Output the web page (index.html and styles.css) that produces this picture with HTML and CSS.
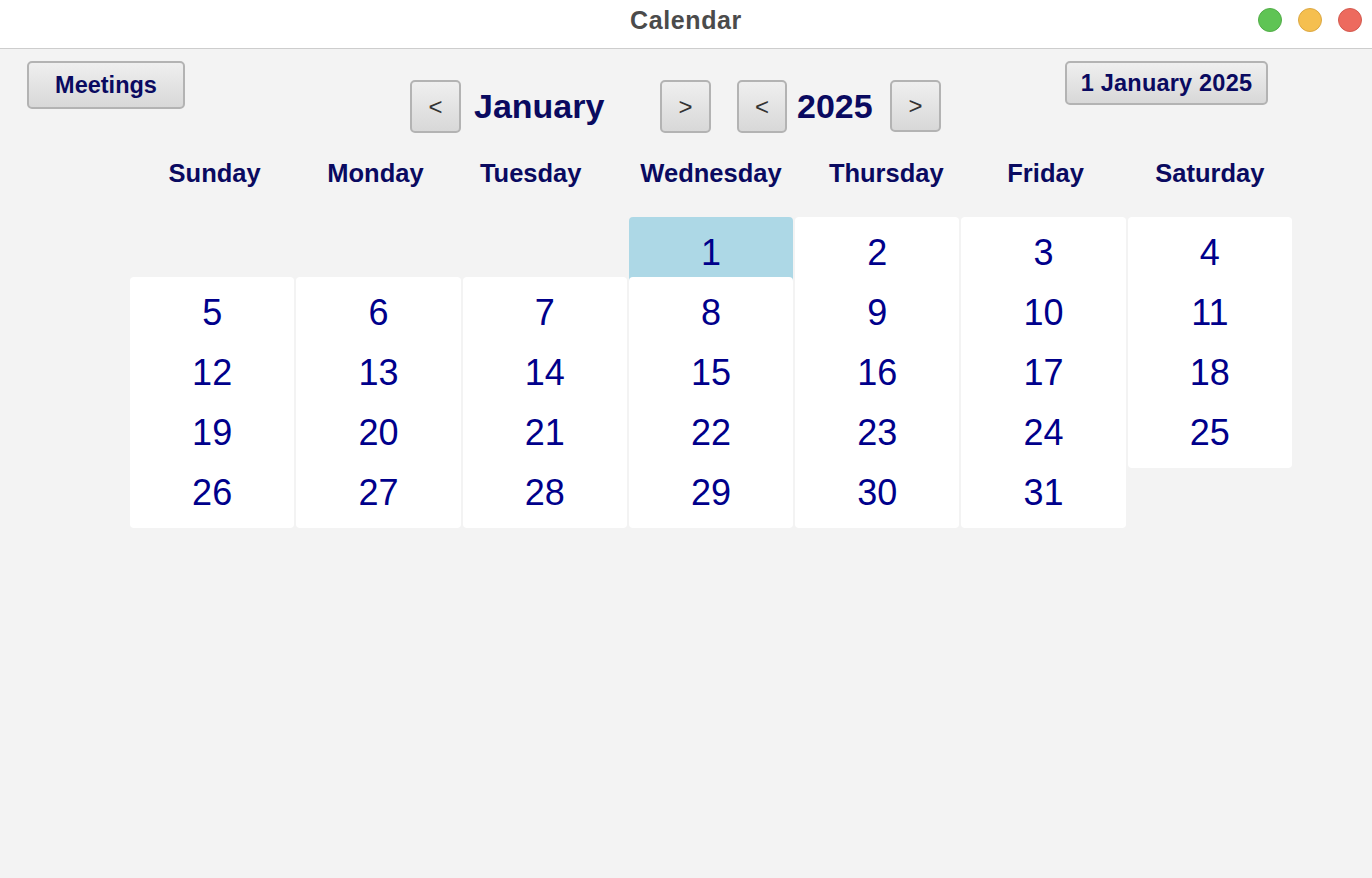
FILE: index.html
```html
<!DOCTYPE html>
<html lang="en">
<head>
<meta charset="utf-8">
<title>Calendar</title>
<link rel="stylesheet" href="styles.css">
</head>
<body>
<div class="window">
  <header class="titlebar">
    <div class="spacer"></div>
    <div class="title">Calendar</div>
    <div class="lights">
      <span class="light green"></span>
      <span class="light yellow"></span>
      <span class="light red"></span>
    </div>
  </header>
  <main class="content">
    <div class="toolbar">
      <button class="btn btn-meetings">Meetings</button>
      <div class="nav">
        <button class="btn btn-arrow">&lt;</button>
        <div class="month-label">January</div>
        <button class="btn btn-arrow">&gt;</button>
        <button class="btn btn-arrow year-prev">&lt;</button>
        <div class="year-label">2025</div>
        <button class="btn btn-arrow year-next">&gt;</button>
      </div>
      <button class="btn btn-today">1 January 2025</button>
    </div>
    <div class="weekdays">
      <div class="wd wd-sun">Sunday</div>
      <div class="wd wd-mon">Monday</div>
      <div class="wd wd-tue">Tuesday</div>
      <div class="wd">Wednesday</div>
      <div class="wd wd-thu">Thursday</div>
      <div class="wd wd-fri">Friday</div>
      <div class="wd">Saturday</div>
    </div>
    <div class="days">
      <div class="day selected first">1</div>
      <div class="day">2</div>
      <div class="day">3</div>
      <div class="day">4</div>
      <div class="day">5</div>
      <div class="day">6</div>
      <div class="day">7</div>
      <div class="day">8</div>
      <div class="day">9</div>
      <div class="day">10</div>
      <div class="day">11</div>
      <div class="day">12</div>
      <div class="day">13</div>
      <div class="day">14</div>
      <div class="day">15</div>
      <div class="day">16</div>
      <div class="day">17</div>
      <div class="day">18</div>
      <div class="day">19</div>
      <div class="day">20</div>
      <div class="day">21</div>
      <div class="day">22</div>
      <div class="day">23</div>
      <div class="day">24</div>
      <div class="day">25</div>
      <div class="day">26</div>
      <div class="day">27</div>
      <div class="day">28</div>
      <div class="day">29</div>
      <div class="day">30</div>
      <div class="day">31</div>
    </div>
  </main>
</div>
</body>
</html>
```
FILE: styles.css
```css
* { box-sizing: border-box; }
html, body {
  margin: 0;
  padding: 0;
  width: 1372px;
  height: 878px;
  overflow: hidden;
  background: #f3f3f3;
  font-family: "Liberation Sans", Arial, sans-serif;
}
.window {
  width: 1372px;
  height: 878px;
  display: flex;
  flex-direction: column;
}
.titlebar {
  height: 49px;
  background: #ffffff;
  border-bottom: 1px solid #cdcdcd;
  display: grid;
  grid-template-columns: 1fr auto 1fr;
  align-items: start;
  padding-top: 7px;
}
.title {
  font-weight: bold;
  font-size: 25px;
  line-height: 26px;
  color: #4b4b4b;
  letter-spacing: 0.6px;
}
.lights {
  display: flex;
  justify-content: flex-end;
  gap: 16px;
  padding-right: 10px;
  padding-top: 1px;
}
.light {
  width: 24px;
  height: 24px;
  border-radius: 50%;
  display: block;
}
.green { background: #5fc454; border: 1px solid #52ad48; }
.yellow { background: #f5bf4f; border: 1px solid #dca843; }
.red { background: #ed6a5e; border: 1px solid #d35a4f; }

.content {
  flex: 1;
  padding-top: 12px;
}
.toolbar {
  display: flex;
  align-items: flex-start;
  padding-left: 27px;
}
.btn {
  font-family: "Liberation Sans", Arial, sans-serif;
  background: linear-gradient(#efefef, #d8d8d8);
  border: 2px solid #b3b3b3;
  border-radius: 5px;
  padding: 0;
  margin: 0;
  cursor: default;
}
.btn-meetings {
  width: 158px;
  height: 48px;
  font-weight: bold;
  font-size: 23.5px;
  color: #0a0a60;
}
.btn-today {
  margin-left: 124px;
  width: 203px;
  height: 44px;
  font-weight: bold;
  font-size: 23.5px;
  color: #0a0a60;
  letter-spacing: 0.2px;
}
.nav {
  margin-left: 225px;
  margin-top: 19px;
  display: flex;
  align-items: center;
}
.btn-arrow {
  width: 51px;
  height: 53px;
  font-size: 24px;
  color: #333333;
}
.month-label {
  width: 199px;
  padding-left: 13px;
  font-weight: bold;
  font-size: 34px;
  color: #0a0a60;
}
.year-prev { margin-left: 26px; width: 50px; }
.year-label {
  padding-left: 10px;
  width: 103px;
  font-weight: bold;
  font-size: 34px;
  color: #0a0a60;
}
.year-next { margin-top: -2px; height: 52px; }

.weekdays {
  margin-top: 25px;
  margin-left: 130px;
  width: 1162px;
  display: grid;
  grid-template-columns: repeat(7, 1fr);
  column-gap: 2px;
}
.wd {
  text-align: center;
  font-weight: bold;
  font-size: 25.5px;
  line-height: 30px;
  color: #0a0a60;
}
.wd-sun { padding-left: 5px; }
.wd-mon { padding-right: 6px; }
.wd-tue { padding-right: 28px; }
.wd-thu { padding-left: 18px; }
.wd-fri { padding-left: 4px; }
.days {
  margin-top: 29px;
  margin-left: 130px;
  width: 1162px;
  display: grid;
  grid-template-columns: repeat(7, 1fr);
  grid-auto-rows: 60px;
  column-gap: 2px;
}
.day {
  height: 71px;
  background: #ffffff;
  border-radius: 4px;
  display: flex;
  align-items: center;
  justify-content: center;
  font-size: 36px;
  color: #00008b;
}
.day.first { grid-column-start: 4; }
.day.selected { background: #add8e6; }
```
